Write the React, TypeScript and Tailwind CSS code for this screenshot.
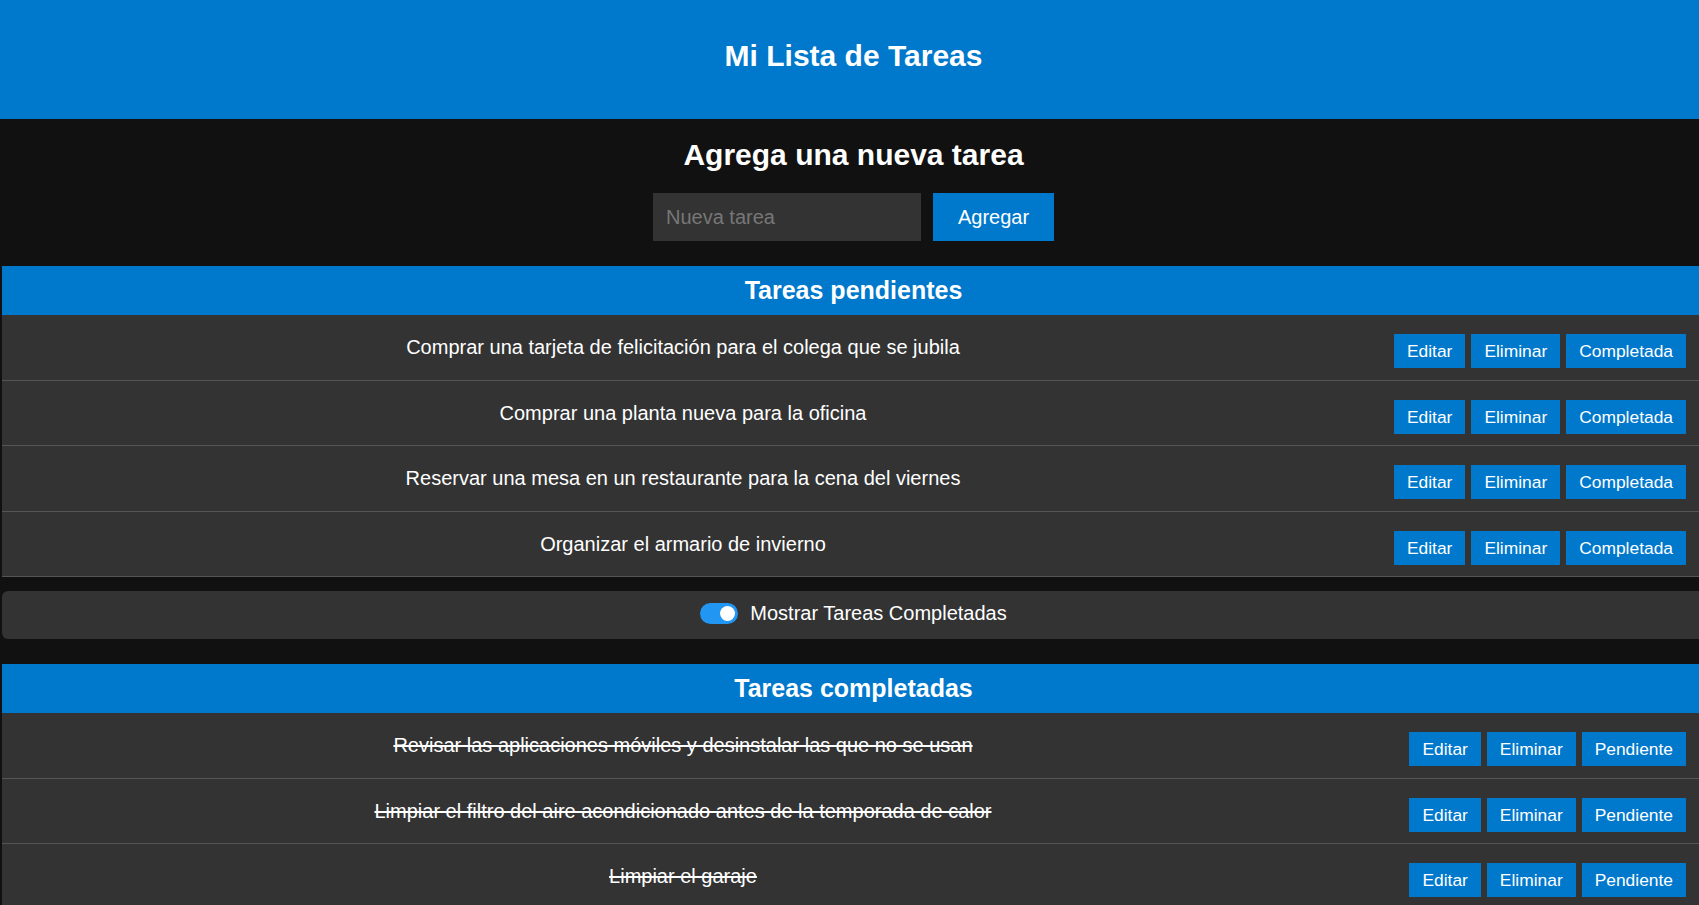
import { useState } from 'react'

interface Task {
  id: number
  text: string
}

const pending: Task[] = [
  { id: 1, text: 'Comprar una tarjeta de felicitación para el colega que se jubila' },
  { id: 2, text: 'Comprar una planta nueva para la oficina' },
  { id: 3, text: 'Reservar una mesa en un restaurante para la cena del viernes' },
  { id: 4, text: 'Organizar el armario de invierno' },
]

const completed: Task[] = [
  { id: 5, text: 'Revisar las aplicaciones móviles y desinstalar las que no se usan' },
  { id: 6, text: 'Limpiar el filtro del aire acondicionado antes de la temporada de calor' },
  { id: 7, text: 'Limpiar el garaje' },
]

function ActionButton({ label }: { label: string }) {
  return (
    <button className="h-[34px] px-[13px] bg-[#0078cc] text-white text-[17.4px] leading-[20px]">
      {label}
    </button>
  )
}

function TaskRow({ task, done }: { task: Task; done?: boolean }) {
  return (
    <li className="flex items-start h-[65.5px] pt-[19px] bg-[#333333] border-b border-[#555555]">
      <span
        className={`w-[1362px] shrink-0 mt-[2px] text-center text-[20px] leading-[23px] ${done ? 'line-through' : ''}`}
      >
        {task.text}
      </span>
      <div className="ml-auto flex gap-[6px] pr-[19px]">
        <ActionButton label="Editar" />
        <ActionButton label="Eliminar" />
        <ActionButton label={done ? 'Pendiente' : 'Completada'} />
      </div>
    </li>
  )
}

function SectionTitle({ children }: { children: string }) {
  return (
    <h2 className="h-[49px] flex items-center justify-center bg-[#0078cc] text-[25px] font-bold">
      {children}
    </h2>
  )
}

export default function App() {
  const [showDone, setShowDone] = useState(true)

  return (
    <div className="min-h-screen bg-[#111111] overflow-hidden text-white font-['Liberation_Sans',Arial,sans-serif]">
      <div className="w-[1707px]">
        <header className="h-[119px] bg-[#0078cc] pt-[39px] text-center text-[30px] font-bold leading-[34px]">
          Mi Lista de Tareas
        </header>

        <main className="px-[2px]">
          <section className="pt-[19px] text-center">
            <h2 className="text-[30px] font-bold leading-[34px]">Agrega una nueva tarea</h2>
            <form className="mt-[21px] flex justify-center gap-[12px]">
              <input
                type="text"
                placeholder="Nueva tarea"
                className="w-[268px] h-[48px] px-[13px] bg-[#333333] text-[20px] text-white placeholder:text-[#777777] outline-none"
              />
              <button type="button" className="w-[121px] h-[48px] bg-[#0078cc] text-[20px] text-white">
                Agregar
              </button>
            </form>
          </section>

          <section className="mt-[25px]">
            <SectionTitle>Tareas pendientes</SectionTitle>
            <ul>
              {pending.map((t) => (
                <TaskRow key={t.id} task={t} />
              ))}
            </ul>
          </section>

          <div className="mt-[14px] h-[48px] pb-[3px] rounded-[6px] bg-[#333333] flex items-center justify-center gap-[12px]">
            <button
              type="button"
              onClick={() => setShowDone(!showDone)}
              className={`w-[38px] h-[21px] rounded-full flex items-center px-[3px] ${showDone ? 'bg-[#2196f3] justify-end' : 'bg-[#777777] justify-start'}`}
            >
              <span className="w-[15px] h-[15px] rounded-full bg-white" />
            </button>
            <span className="text-[20px] leading-[23px]">Mostrar Tareas Completadas</span>
          </div>

          {showDone && (
            <section className="mt-[25px]">
              <SectionTitle>Tareas completadas</SectionTitle>
              <ul>
                {completed.map((t) => (
                  <TaskRow key={t.id} task={t} done />
                ))}
              </ul>
            </section>
          )}
        </main>
      </div>
    </div>
  )
}
